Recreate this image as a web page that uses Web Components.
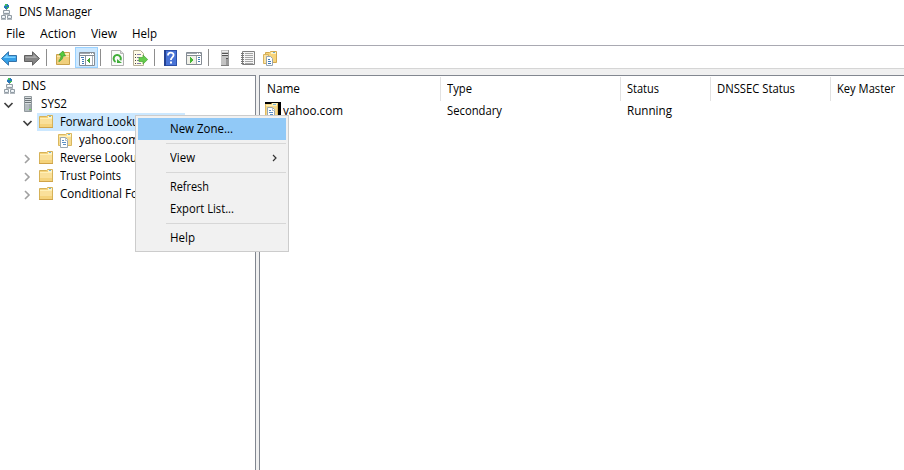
<!DOCTYPE html>
<html lang="en">
<head>
<meta charset="utf-8">
<title>DNS Manager</title>
<style>
    html, body {
        margin: 0;
        height: 100%;
        overflow: hidden;
        background: #fff;
    }
</style>
</head>
<body>
<dns-window></dns-window>

<script>
const icons = {
    dns: `
        <g transform="translate(-1 0)">
        <path d="M6 0h3v1h1v3h-1v1h-3v-1h-1v-3h1z" fill="#2678b8"/>
        <path d="M6 0h2v2h-2zM8 3h2v1h-1v1h-1z" fill="#42b85a"/><path d="M5 1h1v1h-1z" fill="#8fd4e8"/>
        <path d="M7 5h1v2h-1zM7 10h1v1h-1z" fill="#8b9298"/>
        <path d="M4.500 6.500h6v3h-6z" fill="#e7edf2" stroke="#929ca4"/>
        <path d="M2.500 11.500h4v3h-4zM8.500 11.500h4v3h-4z" fill="#e7edf2" stroke="#929ca4"/>
        <path d="M6 7h3v1h-3zM4 12h1v1h-1zM10 12h1v1h-1z" fill="#fff"/>
        <path d="M4 10h7v1h-7zM2 15h5v1h-5zM8 15h5v1h-5z" fill="#b2b9bf"/>
        </g>`,
    server: `
        <g transform="translate(1 0)">
        <path d="M4.500 .5h7v15h-7z" fill="#b4bcc0" stroke="#929a9e"/>
        <path d="M5 1h6v7h-6z" fill="#d7dcde"/>
        <path d="M5 2h6v1h-6zM5 4h6v1h-6zM5 6h6v1h-6z" fill="#6d7478"/>
        <path d="M9 8h2v7h-2z" fill="#a0a9ad"/><path d="M9 13h2v1h-2z" fill="#62e53c"/>
        </g>`,
    tower: `
        <path d="M4 0h8v16h-8z" fill="#999"/><path d="M4 0h7v15h-7z" fill="#c3c3c3"/>
        <path d="M5 1h6v1h-6zM5 4h6v1h-6z" fill="#eee"/>
        <path d="M5 3h6v1h-6zM5 5h6v1h-6zM9 8h2v1h-2z" fill="#555"/>
        <path d="M9 9h3v7h-3z" fill="#999"/><path d="M4 15h8v1h-8z" fill="#808080"/>`,
    folder: `
        <path d="M1.500 2.500h7l1-1h5v12h-13z" fill="#f5d37c" stroke="#d6b258"/>
        <path d="M10 2h4v2h-4z" fill="#fff4cb"/><path d="M11 2h2v1h-2z" fill="#75b4da"/>
        <path d="M2 4h12v1h-12z" fill="#fff0b8"/><path d="M2 5h12v5h-12z" fill="#fae09a"/>
        <path d="M1 13h14v1h-14z" fill="#d0a348"/>`,
    zone: `
        <path d="M1.500 2.500h7l1-1h5v12h-13z" fill="#f7dc92" stroke="#d9b75f"/>
        <path d="M10 2h4v2h-4z" fill="#fff4cb"/><path d="M11 2h2v1h-2z" fill="#75b4da"/>
        <path d="M2 4h12v1h-12z" fill="#fff0b8"/>
        <path d="M3.500 5.500h5l2 2v8h-7z" fill="#fff" stroke="#98a7b3"/>
        <path d="M8 6h1v2h2v1h-3z" fill="#b5c1cb"/>
        <path d="M5 8h2v1h-2zM5 10h4v1h-4zM6 12h3v1h-3z" fill="#5a8fc6"/>`,
    record: `
        <path d="M0 0h16v16h-16z" fill="#000"/>
        <path d="M0 2h6l1-1h6v15h-13z" fill="#f5d88b"/>
        <path d="M0 2h1v14h-1zM12 2h1v14h-1z" fill="#dfba62"/>
        <path d="M7 1h5v2h-5z" fill="#fff0bd"/><path d="M8 2h3v1h-3z" fill="#75b4da"/>
        <path d="M1 3h11v1h-11z" fill="#fff0b8"/>
        <path d="M2.500 5.500h5l2 2v8h-7z" fill="#fff" stroke="#98a7b3"/>
        <path d="M7 6h1v2h2v1h-3z" fill="#b5c1cb"/>
        <path d="M4 8h2v1h-2zM4 10h4v1h-4zM5 12h3v1h-3z" fill="#5a8fc6"/>`,
    back: `
        <path d="M.5 8.500L7.500 1.800V5.500H15.500V11.500H7.500V15.200Z" fill="#35a0e8" stroke="#3472a8"/>
        <path d="M2.500 8L6.500 4.200V6.600H14.500V8Z" fill="#7bd0ff"/>`,
    forward: `
        <path d="M15.500 8.500L8.500 1.800V5.500H.5V11.500H8.500V15.200Z" fill="#858585" stroke="#606060"/>
        <path d="M13.500 8L9.500 4.200V6.600H1.500V8Z" fill="#aaa"/>`,
    up: `
        <path d="M1.500 4.500h6l1-2h6v12h-13z" fill="#f0cf7c" stroke="#c9a14b"/>
        <path d="M9 3h5v2h-5z" fill="#fff0b5"/><path d="M2 6h12v1h-12z" fill="#fae8a9"/>
        <path d="M4 11.500C6.500 10.500 7.800 8.500 8 6H10.500L8 1L4 4.500L6 5.200C6 8 5.200 9.700 3.500 11Z" fill="#56cc3d" stroke="#35942a" stroke-width=".7"/>`,
    tree: `
        <g transform="translate(1 0)">
        <path d="M.5 2.500h15v13h-15z" fill="#fff" stroke="#858c94"/>
        <path d="M1 3h14v1h-14z" fill="#a1a8b0"/><path d="M0 5h16v1h-16z" fill="#858c94"/>
        <path d="M11 3h1v1h-1zM13 3h1v1h-1z" fill="#fff"/><path d="M6 6h1v9h-1z" fill="#8b939a"/>
        <path d="M2 7h3v1h-3zM3 9h2v1h-2zM3 11h2v1h-2zM3 13h2v1h-2z" fill="#3f79b5"/>
        <path d="M11 8v5h-1v-1h-1v-1h-1v-1h1v-1h1v-1z" fill="#45a735"/>
        <path d="M13 6h1v9h-1z" fill="#aab1b6"/>
        </g>`,
    play: `
        <path d="M.5 2.500h15v12h-15z" fill="#fff" stroke="#858c94"/>
        <path d="M1 3h14v1h-14z" fill="#a1a8b0"/><path d="M0 5h16v1h-16z" fill="#858c94"/>
        <path d="M11 3h1v1h-1zM13 3h1v1h-1z" fill="#fff"/><path d="M10 6h1v8h-1z" fill="#9aa3ab"/>
        <path d="M1 6h9v8h-9z" fill="#f1f1e8"/>
        <path d="M4 7h1v1h1v1h1v2h-1v1h-1v1h-1z" fill="#45b735"/>
        <path d="M12 7h2v1h-2zM12 9h2v1h-2zM12 11h2v1h-2z" fill="#3f79b5"/>`,
    refresh: `
        <path d="M2.500 .5h9l3 3v12h-12z" fill="#fafafa" stroke="#b0b0b0"/>
        <path d="M11.500 .5v3h3" fill="#ddd" stroke="#b8b8b8"/>
        <path d="M6.600 11.800A3.600 3.600 0 1 1 11.400 10.300" fill="none" stroke="#41ae3a" stroke-width="2"/>
        <path d="M8 9V13h5z" fill="#41ae3a"/>`,
    export: `
        <path d="M1.500 .5h7l3 3v12h-10z" fill="#fffbe6" stroke="#b5ae96"/>
        <path d="M3 4h1v1h-1zM3 7h1v1h-1zM3 10h1v1h-1zM3 13h1v1h-1z" fill="#444"/>
        <path d="M5 4h4v1h-4zM5 7h3v1h-3zM5 10h3v1h-3zM5 13h4v1h-4z" fill="#827daa"/>
        <path d="M7 7.500h4v-2.500l4.700 4.500l-4.700 4.500v-2.500h-4z" fill="#65cc4c" stroke="#49a536" stroke-width=".7"/>`,
    help: `
        <g transform="translate(-1 0)">
        <path d="M2 0h13v16h-13z" fill="#2b4fa8"/><path d="M4 1h10v14h-10z" fill="#4873d6"/>
        <path d="M2 0h2v16h-2z" fill="#244292"/>
        <path d="M6 5.400C6 1.900 11.600 1.900 11.600 5C11.600 7.500 8.900 7.300 8.900 10" fill="none" stroke="#fff" stroke-width="1.800"/>
        <path d="M8 11.500h2v2h-2z" fill="#fff"/>
        </g>`,
    list: `
        <path d="M2.500 1.500h12v13h-12z" fill="#f5f5f5" stroke="#808080"/>
        <path d="M5 3h8v1h-8zM5 5h8v1h-8zM5 7h8v1h-8zM5 9h8v1h-8zM5 11h8v1h-8zM5 13h8v1h-8z" fill="#a5a5a5"/>
        <path d="M1 3h3v1h-3zM1 5h3v1h-3zM1 7h3v1h-3zM1 9h3v1h-3zM1 11h3v1h-3zM1 13h3v1h-3z" fill="#777"/>`,
    zones: `
        <g transform="translate(-1 0)">
        <path d="M3.500 2.500h4l1-1h6v11h-11z" fill="#f7d47b" stroke="#d3a84e"/>
        <path d="M9 2h5v2h-5z" fill="#fff2c2"/><path d="M11 2h2v1h-2z" fill="#69a8d0"/>
        <path d="M1.500 4.500h5v9h-5z" fill="#fae3a4" stroke="#d8b35e"/>
        <path d="M4.500 6.500h4l2 2v7h-6z" fill="#fff" stroke="#98a5b0"/>
        <path d="M6 9h2v1h-2zM6 11h3v1h-3zM6 13h3v1h-3z" fill="#3979ba"/>
        </g>`,
    open: `<path d="M4.500 6L8.500 10L12.500 6" fill="none" stroke="#404040" stroke-width="1.700"/>`,
    closed: `<path d="M6 4L10 8L6 12" fill="none" stroke="#a0a0a0" stroke-width="1.600"/>`,
    submenu: `<path d="M7 5L10 8L7 11" fill="none" stroke="#333" stroke-width="1.200"/>`
};

class UiIcon extends HTMLElement {
    constructor() {
        super();
        this.shadowDOM = this.attachShadow({mode: "open"});
    }

    connectedCallback() {
        this.shadowDOM.innerHTML = `
        <style>
            :host { display: block; flex: none; width: 16px; height: 16px; }
            svg { display: block; overflow: visible; }
        </style>
        <svg width="16" height="16" viewBox="0 0 16 16">${icons[this.getAttribute("name")] || ""}</svg>`;
    }
}

// One line of text, condensed to the width given in pixels.
class UiLabel extends HTMLElement {
    constructor() {
        super();
        this.shadowDOM = this.attachShadow({mode: "open"});
    }

    connectedCallback() {
        this.shadowDOM.innerHTML = `
        <style>
            :host { display: block; flex: none; white-space: nowrap; line-height: 18px; }
            span { display: inline-block; transform-origin: 0 50%; }
        </style>
        <span>${this.getAttribute("text")}</span>`;
        const width = Number(this.getAttribute("width"));
        const span = this.shadowDOM.querySelector("span");
        this.style.width = width + "px";
        span.style.transform = `scaleX(${width / span.getBoundingClientRect().width})`;
    }
}

class ToolBar extends HTMLElement {
    constructor() {
        super();
        this.shadowDOM = this.attachShadow({mode: "open"});
    }

    connectedCallback() {
        const groups = [["back", "forward"], ["up", "tree"], ["refresh", "export"], ["help", "play"], ["tower", "list", "zones"]];
        this.shadowDOM.innerHTML = `
        <style>
            :host {
                display: flex;
                box-sizing: border-box;
                height: 24px;
                border-top: 1px solid #a9a9b2;
                border-bottom: 1px solid #d5d5d5;
                background: #fff;
            }
            .group { display: flex; padding-top: 1px; }
            .group:first-of-type { margin-left: -2px; }
            .group + .group::before {
                content: "";
                width: 1px;
                height: 17px;
                margin: 2px 5px 0 2px;
                background: #8d8d8d;
            }
            .button {
                box-sizing: border-box;
                width: 23px;
                height: 21px;
                padding: 2px 2px 0 2px;
                border: 1px solid transparent;
            }
            .button.active { background: #cce8ff; border-color: #99d1ff; }
        </style>
        ${groups.map(group => `<div class="group">${group.map(name =>
            `<div class="button ${name === "tree" ? "active" : ""}"><ui-icon name="${name}"></ui-icon></div>`).join("")}</div>`).join("")}`;
    }
}

class TreeItem extends HTMLElement {
    constructor() {
        super();
        this.shadowDOM = this.attachShadow({mode: "open"});
    }

    connectedCallback() {
        const state = this.getAttribute("state");
        this.shadowDOM.innerHTML = `
        <style>
            :host {
                display: flex;
                align-items: center;
                height: 18px;
                padding-left: calc(var(--level) * 19px - 19px);
            }
            :host([level="0"]) { padding-left: 0; }
            :host([level="0"]) .arrow { display: none; }
            :host([level="0"]) .content { padding-left: 3px; }
            :host([level="0"]) .content ui-icon { margin-right: 3px; }
            .arrow { width: 16px; margin-right: 2px; }
            .arrow ui-icon { position: relative; top: 1px; }
            .content { box-sizing: border-box; display: flex; align-items: center; height: 18px; padding-left: 1px; }
            .content ui-icon { margin-right: 6px; }
            :host([selected]) .content { width: 148px; background: #cce8ff; }
        </style>
        <div class="arrow">${state ? `<ui-icon name="${state}"></ui-icon>` : ""}</div>
        <div class="content">
            <ui-icon name="${this.getAttribute("icon")}"></ui-icon>
            <slot></slot>
        </div>`;
        this.style.setProperty("--level", this.getAttribute("level"));
    }
}

class RecordList extends HTMLElement {
    constructor() {
        super();
        this.shadowDOM = this.attachShadow({mode: "open"});
    }

    connectedCallback() {
        this.shadowDOM.innerHTML = `
        <style>
            :host { display: block; overflow: hidden; }
            .row {
                display: grid;
                grid-template-columns: 181px 180px 90px 120px 90px;
            }
            .head { height: 24px; margin-top: 1px; }
            .head div { box-sizing: border-box; border-right: 1px solid #e2e2e2; padding: 3px 0 0 6px; }
            .head div:first-child { padding-left: 7px; }
            .body { height: 18px; margin-top: 1px; }
            .body div { padding-left: 6px; }
            .body .name { display: flex; padding-left: 5px; }
            .name ui-icon { margin-right: 2px; }
        </style>
        <div class="row head">
            <div><ui-label text="Name" width="33"></ui-label></div>
            <div><ui-label text="Type" width="25"></ui-label></div>
            <div><ui-label text="Status" width="32"></ui-label></div>
            <div><ui-label text="DNSSEC Status" width="78"></ui-label></div>
            <div><ui-label text="Key Master" width="58"></ui-label></div>
        </div>
        <div class="row body">
            <div class="name"><ui-icon name="record"></ui-icon><ui-label text="yahoo.com" width="60"></ui-label></div>
            <div><ui-label text="Secondary" width="55"></ui-label></div>
            <div><ui-label text="Running" width="45"></ui-label></div>
        </div>`;
    }
}

class MenuItem extends HTMLElement {
    constructor() {
        super();
        this.shadowDOM = this.attachShadow({mode: "open"});
    }

    connectedCallback() {
        this.shadowDOM.innerHTML = `
        <style>
            :host {
                display: flex;
                align-items: center;
                justify-content: space-between;
                height: 22px;
                padding: 0 4px 0 32px;
            }
            :host([active]) { background: #91c9f7; }
        </style>
        <slot></slot>
        ${this.hasAttribute("submenu") ? `<ui-icon name="submenu"></ui-icon>` : ""}`;
    }
}

class ContextMenu extends HTMLElement {
    constructor() {
        super();
        this.shadowDOM = this.attachShadow({mode: "open"});
    }

    connectedCallback() {
        this.shadowDOM.innerHTML = `
        <style>
            :host {
                display: block;
                box-sizing: border-box;
                width: 154px;
                padding: 2px;
                border: 1px solid #ccc;
                background: #f1f1f1;
            }
            hr { height: 1px; margin: 3px 0 3px 28px; border: 0; background: #d7d7d7; }
        </style>
        <menu-item active><ui-label text="New Zone..." width="63"></ui-label></menu-item>
        <hr>
        <menu-item submenu><ui-label text="View" width="25"></ui-label></menu-item>
        <hr>
        <menu-item><ui-label text="Refresh" width="39"></ui-label></menu-item>
        <menu-item><ui-label text="Export List..." width="64"></ui-label></menu-item>
        <hr>
        <menu-item><ui-label text="Help" width="25"></ui-label></menu-item>`;
    }
}

class DnsWindow extends HTMLElement {
    constructor() {
        super();
        this.shadowDOM = this.attachShadow({mode: "open"});
    }

    connectedCallback() {
        this.shadowDOM.innerHTML = `
        <style>
            :host {
                display: flex;
                flex-direction: column;
                position: relative;
                height: 100vh;
                overflow: hidden;
                background: #fff;
                color: #000;
                font: 12px "Open Sans", "Noto Sans", sans-serif;
            }
            header { display: flex; align-items: center; height: 24px; }
            header ui-icon { margin: -1px 3px 0 0; }
            nav { box-sizing: border-box; display: flex; gap: 15px; height: 21px; padding: 1px 0 0 6px; }
            main {
                flex: 1;
                display: grid;
                grid-template-columns: 256px 1fr;
                gap: 3px;
                padding-top: 6px;
                background: #f0f0f0;
            }
            .tree, record-list { background: #fff; border-top: 1px solid #828790; }
            .tree { border-right: 1px solid #828790; padding-top: 1px; overflow: hidden; }
            record-list { border-left: 1px solid #828790; }
            context-menu { position: absolute; left: 135px; top: 115px; }
        </style>
        <header><ui-icon name="dns"></ui-icon><ui-label text="DNS Manager" width="73"></ui-label></header>
        <nav>
            <ui-label text="File" width="19"></ui-label>
            <ui-label text="Action" width="36"></ui-label>
            <ui-label text="View" width="26"></ui-label>
            <ui-label text="Help" width="25"></ui-label>
        </nav>
        <tool-bar></tool-bar>
        <main>
            <div class="tree">
                <tree-item level="0" icon="dns"><ui-label text="DNS" width="24"></ui-label></tree-item>
                <tree-item level="1" icon="server" state="open"><ui-label text="SYS2" width="26"></ui-label></tree-item>
                <tree-item level="2" icon="folder" state="open" selected><ui-label text="Forward Looku" width="79"></ui-label></tree-item>
                <tree-item level="3" icon="zone"><ui-label text="yahoo.com" width="60"></ui-label></tree-item>
                <tree-item level="2" icon="folder" state="closed"><ui-label text="Reverse Looku" width="77"></ui-label></tree-item>
                <tree-item level="2" icon="folder" state="closed"><ui-label text="Trust Points" width="61"></ui-label></tree-item>
                <tree-item level="2" icon="folder" state="closed"><ui-label text="Conditional Fo" width="78"></ui-label></tree-item>
            </div>
            <record-list></record-list>
        </main>
        <context-menu></context-menu>`;
    }
}

customElements.define("ui-icon", UiIcon);
customElements.define("ui-label", UiLabel);
customElements.define("tool-bar", ToolBar);
customElements.define("tree-item", TreeItem);
customElements.define("record-list", RecordList);
customElements.define("menu-item", MenuItem);
customElements.define("context-menu", ContextMenu);
customElements.define("dns-window", DnsWindow);
</script>
</body>
</html>
